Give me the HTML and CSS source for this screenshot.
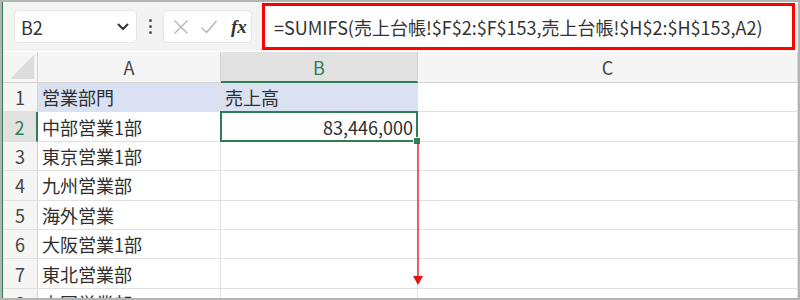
FILE: index.html
```html
<!DOCTYPE html>
<html lang="ja">
<head>
<meta charset="utf-8">
<link rel="stylesheet" href="styles.css">
</head>
<body>
<div class="frame">
  <div class="inner">
    <div class="fbar">
      <div class="namebox">
        <span class="nb-text">B2</span>
        <svg class="chev" width="12" height="8" viewBox="0 0 12 8"><path d="M1.5 1.5 L6 6 L10.5 1.5" fill="none" stroke="#333" stroke-width="2" stroke-linecap="round" stroke-linejoin="round"/></svg>
      </div>
      <div class="dots"><i></i><i></i><i></i></div>
      <div class="fbtns">
        <svg width="16" height="16" viewBox="0 0 16 16"><path d="M1.5 1.5 L14.5 14.5 M14.5 1.5 L1.5 14.5" stroke="#b4b4b4" stroke-width="1.4" fill="none"/></svg>
        <svg width="18" height="16" viewBox="0 0 18 16"><path d="M1.5 8.5 L6.5 13.5 L16.5 2" stroke="#b4b4b4" stroke-width="1.4" fill="none"/></svg>
        <span class="fx">fx</span>
      </div>
      <div class="formula">
        <span class="ftext">=SUMIFS(売上台帳!$F$2:$F$153,売上台帳!$H$2:$H$153,A2)</span>
      </div>
    </div>
    <div class="sheet">
      <div class="corner"><svg width="24" height="24" viewBox="0 0 24 24"><path d="M24 0 L24 24 L0 24 Z" fill="#dcdcdc"/></svg></div>
      <div class="ch">A</div>
      <div class="ch sel">B</div>
      <div class="ch">C</div>

      <div class="rh">1</div>
      <div class="c fill">営業部門</div>
      <div class="c fill">売上高</div>
      <div class="c"></div>

      <div class="rh sel">2</div>
      <div class="c">中部営業1部</div>
      <div class="c num active">83,446,000
        <span class="handle"></span>
        <svg class="arrow" width="12" height="148" viewBox="0 0 12 148"><path d="M6 2 L6 136" stroke="#e81010" stroke-width="1.3"/><path d="M1 135 L11 135 L6 144 Z" fill="#e81010"/></svg>
      </div>
      <div class="c"></div>

      <div class="rh">3</div>
      <div class="c">東京営業1部</div>
      <div class="c"></div>
      <div class="c"></div>

      <div class="rh">4</div>
      <div class="c">九州営業部</div>
      <div class="c"></div>
      <div class="c"></div>

      <div class="rh">5</div>
      <div class="c">海外営業</div>
      <div class="c"></div>
      <div class="c"></div>

      <div class="rh">6</div>
      <div class="c">大阪営業1部</div>
      <div class="c"></div>
      <div class="c"></div>

      <div class="rh">7</div>
      <div class="c">東北営業部</div>
      <div class="c"></div>
      <div class="c"></div>

      <div class="rh">8</div>
      <div class="c">中国営業部</div>
      <div class="c"></div>
      <div class="c"></div>
    </div>
  </div>
</div>
</body>
</html>
```

FILE: styles.css
```css
html, body {
  margin: 0;
  padding: 0;
  background: #ffffff;
}
body {
  font-family: "Noto Sans CJK JP", "Noto Sans", sans-serif;
  color: #2e2e2e;
}
.frame {
  width: 800px;
  height: 300px;
  box-sizing: border-box;
  border: 2px solid #b4b4b4;
  overflow: hidden;
  background: #fff;
}
.inner {
  height: 100%;
  border-left: 1px solid #2f7d52;
  display: flex;
  flex-direction: column;
}
.fbar {
  height: 49px;
  flex: none;
  background: #f3f3f3;
  display: flex;
  align-items: center;
  box-sizing: border-box;
  padding-left: 11px;
}
.namebox {
  width: 123px;
  height: 33px;
  box-sizing: border-box;
  background: #fff;
  border: 1px solid #e6e6e6;
  border-radius: 5px;
  display: flex;
  align-items: center;
  justify-content: space-between;
  padding: 0 7px 0 6px;
}
.nb-text {
  font-size: 18px;
  color: #333;
  line-height: 1;
}
.dots {
  width: 26px;
  display: flex;
  flex-direction: column;
  align-items: center;
  gap: 3px;
}
.dots i {
  width: 3px;
  height: 3px;
  border-radius: 50%;
  background: #555;
  display: block;
}
.fbtns {
  width: 89px;
  height: 33px;
  box-sizing: border-box;
  background: #fff;
  border: 1px solid #e6e6e6;
  border-radius: 5px;
  display: flex;
  align-items: center;
  padding-left: 9px;
  gap: 11px;
}
.fx {
  font-family: "Liberation Serif", "DejaVu Serif", serif;
  font-style: italic;
  font-weight: bold;
  font-size: 19px;
  color: #333;
  margin-left: 2px;
  line-height: 1;
}
.formula {
  margin-left: 10px;
  width: 533px;
  height: 47px;
  box-sizing: border-box;
  border: 3px solid #ff0000;
  background: #fff;
  display: flex;
  align-items: center;
  padding-left: 9px;
}
.ftext {
  font-size: 18px;
  color: #333;
  white-space: nowrap;
}
.sheet {
  flex: 1;
  display: grid;
  grid-template-columns: 35px 183px 197px 1fr;
  grid-template-rows: 31px repeat(8, 29.4px);
  margin-top: 1px;
}
.corner {
  background: #f5f5f5;
  border-right: 1px solid #d4d4d4;
  border-bottom: 1px solid #d4d4d4;
  box-sizing: border-box;
  display: flex;
  align-items: flex-end;
  justify-content: flex-end;
  padding: 0 3px 3px 0;
}
.ch {
  background: #f5f5f5;
  border-right: 1px solid #d4d4d4;
  border-bottom: 1px solid #d4d4d4;
  box-sizing: border-box;
  display: flex;
  align-items: center;
  justify-content: center;
  font-size: 18px;
  color: #444;
}
.ch.sel {
  background: #e1e1e1;
  color: #2f7d52;
  border-bottom: 2px solid #2f7d52;
}
.rh {
  background: #f5f5f5;
  border-right: 1px solid #d4d4d4;
  border-bottom: 1px solid #e1e1e1;
  box-sizing: border-box;
  display: flex;
  align-items: center;
  justify-content: center;
  font-size: 18px;
  color: #444;
}
.rh.sel {
  background: #e1e1e1;
  color: #2f7d52;
  border-right: 2px solid #2f7d52;
}
.c {
  border-right: 1px solid #e1e1e1;
  border-bottom: 1px solid #e1e1e1;
  box-sizing: border-box;
  display: flex;
  align-items: center;
  padding-left: 4px;
  font-size: 18px;
  white-space: nowrap;
  overflow: visible;
}
.c.fill {
  background: #d9e1f2;
}
.c.num {
  justify-content: flex-end;
  padding-right: 4px;
}
.active {
  position: relative;
}
.active::after {
  content: "";
  position: absolute;
  left: -1px;
  top: -1px;
  right: -1px;
  bottom: -1px;
  border: 2px solid #2f7d52;
  pointer-events: none;
}
.handle {
  position: absolute;
  right: -4px;
  bottom: -4px;
  width: 6px;
  height: 6px;
  background: #2f7d52;
  border: 1px solid #fff;
  z-index: 2;
}
.arrow {
  position: absolute;
  right: -7px;
  top: 100%;
  z-index: 3;
}
```
